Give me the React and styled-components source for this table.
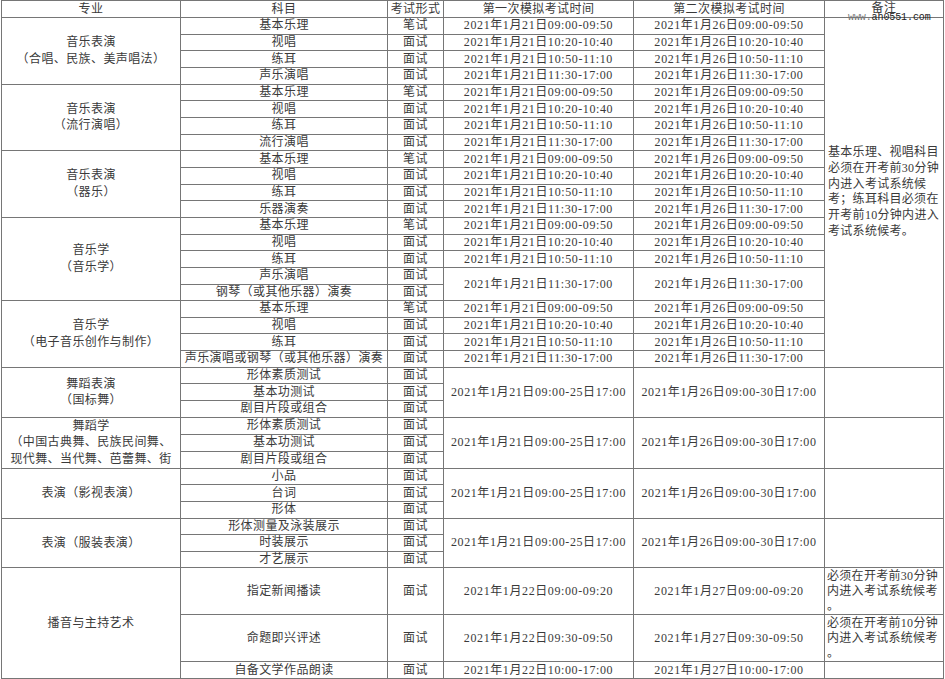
import React from 'react';
import styled, { createGlobalStyle } from 'styled-components';

const GlobalStyle = createGlobalStyle`
  html, body {
    margin: 0;
    padding: 0;
    background: #fff;
  }
`;

const d1 = (t) => `2021年1月21日${t}`;
const d2 = (t) => `2021年1月26日${t}`;

const musicRows = (last) => [
  { subject: '基本乐理', form: '笔试', a: d1('09:00-09:50'), b: d2('09:00-09:50') },
  { subject: '视唱', form: '面试', a: d1('10:20-10:40'), b: d2('10:20-10:40') },
  { subject: '练耳', form: '面试', a: d1('10:50-11:10'), b: d2('10:50-11:10') },
  { subject: last, form: '面试', a: d1('11:30-17:00'), b: d2('11:30-17:00') },
];

const danceRows = (subjects) =>
  subjects.map((s, i) =>
    i === 0
      ? {
          subject: s,
          form: '面试',
          a: '2021年1月21日09:00-25日17:00',
          b: '2021年1月26日09:00-30日17:00',
          span: 3,
          note: '',
          noteSpan: 3,
        }
      : { subject: s, form: '面试', skipDates: true, skipNote: true }
  );

const bigNote = [
  '基本乐理、视唱科目',
  '必须在开考前30分钟',
  '内进入考试系统候',
  '考；练耳科目必须在',
  '开考前10分钟内进入',
  '考试系统候考。',
];

const groups = [
  { major: ['音乐表演', '（合唱、民族、美声唱法）'], items: musicRows('声乐演唱') },
  { major: ['音乐表演', '（流行演唱）'], items: musicRows('流行演唱') },
  { major: ['音乐表演', '（器乐）'], items: musicRows('乐器演奏') },
  {
    major: ['音乐学', '（音乐学）'],
    items: [
      ...musicRows('声乐演唱').slice(0, 3),
      { subject: '声乐演唱', form: '面试', a: d1('11:30-17:00'), b: d2('11:30-17:00'), span: 2 },
      { subject: '钢琴（或其他乐器）演奏', form: '面试', skipDates: true },
    ],
  },
  { major: ['音乐学', '（电子音乐创作与制作）'], items: musicRows('声乐演唱或钢琴（或其他乐器）演奏') },
  { major: ['舞蹈表演', '（国标舞）'], items: danceRows(['形体素质测试', '基本功测试', '剧目片段或组合']) },
  {
    major: ['舞蹈学', '（中国古典舞、民族民间舞、', '现代舞、当代舞、芭蕾舞、街'],
    items: danceRows(['形体素质测试', '基本功测试', '剧目片段或组合']),
  },
  { major: ['表演（影视表演）'], items: danceRows(['小品', '台词', '形体']) },
  { major: ['表演（服装表演）'], items: danceRows(['形体测量及泳装展示', '时装展示', '才艺展示']) },
  {
    major: ['播音与主持艺术'],
    items: [
      {
        subject: '指定新闻播读',
        form: '面试',
        a: '2021年1月22日09:00-09:20',
        b: '2021年1月27日09:00-09:20',
        tall: true,
        note: ['必须在开考前30分钟', '内进入考试系统候考', '。'],
      },
      {
        subject: '命题即兴评述',
        form: '面试',
        a: '2021年1月22日09:30-09:50',
        b: '2021年1月27日09:30-09:50',
        tall: true,
        note: ['必须在开考前10分钟', '内进入考试系统候考', '。'],
      },
      {
        subject: '自备文学作品朗读',
        form: '面试',
        a: '2021年1月22日10:00-17:00',
        b: '2021年1月27日10:00-17:00',
        note: '',
      },
    ],
  },
];

const Page = styled.div`
  position: relative;
  padding: 0 0 0 1px;
  width: 945px;
  height: 679px;
  overflow: hidden;
  font-family: "Liberation Serif", "Noto Sans CJK SC", serif;
  font-size: 12px;
  color: #3a3a3a;
`;

const Table = styled.table`
  border-collapse: collapse;
  table-layout: fixed;
  width: 942px;
`;

const Row = styled.tr`
  height: ${(p) => (p.$tall ? '45.5px' : '16.67px')};
`;

const HeadRow = styled.tr`
  height: 17px;
`;

const Cell = styled.td`
  border: 1px solid #767676;
  padding: 0;
  line-height: 15px;
  text-align: center;
  vertical-align: middle;
  white-space: nowrap;
  overflow: hidden;
  letter-spacing: 0.4px;
`;

const HeadCell = styled(Cell)`
  vertical-align: ${(p) => (p.$top ? 'top' : 'middle')};
`;

const MajorCell = styled(Cell)`
  line-height: 16.6px;
`;

const DateCell = styled(Cell)`
  letter-spacing: 0.6px;
`;

const NoteCell = styled(Cell)`
  text-align: left;
  padding: ${(p) => (p.$top ? '1px 0 0 2px' : '0 0 0 3px')};
  vertical-align: ${(p) => (p.$top ? 'top' : 'middle')};
  line-height: ${(p) => (p.$top ? '15px' : '15.7px')};
  letter-spacing: 0.3px;
`;

const Watermark = styled.div`
  position: absolute;
  left: 848px;
  top: 13px;
  font-family: "Liberation Mono", monospace;
  font-size: 10px;
  line-height: 9px;
  letter-spacing: -0.1px;
  color: #1a1a1a;
  span {
    color: #777;
  }
`;

const lines = (arr) =>
  arr.map((l, i) => (
    <React.Fragment key={i}>
      {i > 0 && <br />}
      {l}
    </React.Fragment>
  ));

export default function App() {
  const body = [];
  let first = true;
  groups.forEach((g, gi) => {
    g.items.forEach((it, i) => {
      body.push(
        <Row key={`${gi}-${i}`} $tall={it.tall}>
          {i === 0 && <MajorCell rowSpan={g.items.length}>{lines(g.major)}</MajorCell>}
          <Cell>{it.subject}</Cell>
          <Cell>{it.form}</Cell>
          {!it.skipDates && <DateCell rowSpan={it.span || 1}>{it.a}</DateCell>}
          {!it.skipDates && <DateCell rowSpan={it.span || 1}>{it.b}</DateCell>}
          {first && <NoteCell rowSpan={21}>{lines(bigNote)}</NoteCell>}
          {gi >= 5 && !it.skipNote && (
            <NoteCell rowSpan={it.noteSpan || 1} $top>
              {Array.isArray(it.note) ? lines(it.note) : it.note}
            </NoteCell>
          )}
        </Row>
      );
      first = false;
    });
  });

  return (
    <Page>
      <GlobalStyle />
      <Table>
        <colgroup>
          <col style={{ width: 179 }} />
          <col style={{ width: 207 }} />
          <col style={{ width: 56 }} />
          <col style={{ width: 190 }} />
          <col style={{ width: 191 }} />
          <col style={{ width: 119 }} />
        </colgroup>
        <thead>
          <HeadRow>
            <HeadCell>专业</HeadCell>
            <HeadCell>科目</HeadCell>
            <HeadCell>考试形式</HeadCell>
            <HeadCell>第一次模拟考试时间</HeadCell>
            <HeadCell>第二次模拟考试时间</HeadCell>
            <HeadCell $top>备注</HeadCell>
          </HeadRow>
        </thead>
        <tbody>{body}</tbody>
      </Table>
      <Watermark>
        <span>www.</span>ah0551.com
      </Watermark>
    </Page>
  );
}
